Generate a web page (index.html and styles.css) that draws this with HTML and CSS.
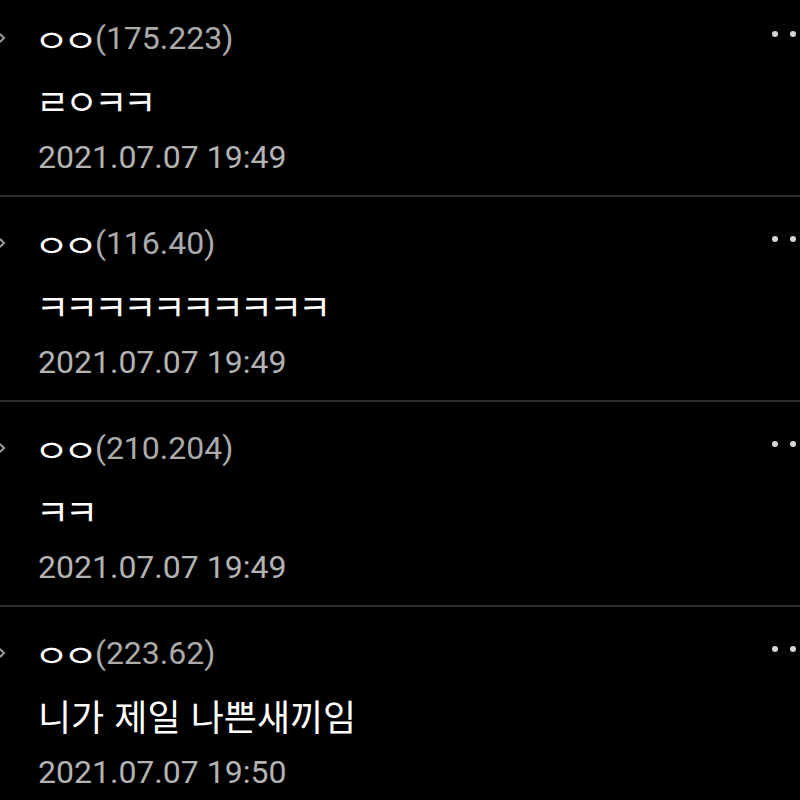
FILE: index.html
```html
<!DOCTYPE html>
<html lang="ko">
<head>
    <meta charset="UTF-8">
    <title>댓글</title>
    <link rel="stylesheet" href="styles.css">
</head>
<body>
    <ul class="comments">
        <li class="comment">
            <div class="comment-head">
                <span class="reply-mark"><svg width="6" height="10" viewBox="0 0 6 10"><path d="M0 1 L4 5 L0 9" fill="none" stroke="#9a9a9a" stroke-width="2"/></svg></span>
                <span class="nick">ㅇㅇ</span><span class="ip">(175.223)</span>
                <span class="menu"><i></i><i></i></span>
            </div>
            <div class="comment-text jamo">ㄹㅇㅋㅋ</div>
            <div class="comment-date">2021.07.07 19:49</div>
        </li>
        <li class="comment">
            <div class="comment-head">
                <span class="reply-mark"><svg width="6" height="10" viewBox="0 0 6 10"><path d="M0 1 L4 5 L0 9" fill="none" stroke="#9a9a9a" stroke-width="2"/></svg></span>
                <span class="nick">ㅇㅇ</span><span class="ip">(116.40)</span>
                <span class="menu"><i></i><i></i></span>
            </div>
            <div class="comment-text jamo">ㅋㅋㅋㅋㅋㅋㅋㅋㅋㅋ</div>
            <div class="comment-date">2021.07.07 19:49</div>
        </li>
        <li class="comment">
            <div class="comment-head">
                <span class="reply-mark"><svg width="6" height="10" viewBox="0 0 6 10"><path d="M0 1 L4 5 L0 9" fill="none" stroke="#9a9a9a" stroke-width="2"/></svg></span>
                <span class="nick">ㅇㅇ</span><span class="ip">(210.204)</span>
                <span class="menu"><i></i><i></i></span>
            </div>
            <div class="comment-text jamo">ㅋㅋ</div>
            <div class="comment-date">2021.07.07 19:49</div>
        </li>
        <li class="comment">
            <div class="comment-head">
                <span class="reply-mark"><svg width="6" height="10" viewBox="0 0 6 10"><path d="M0 1 L4 5 L0 9" fill="none" stroke="#9a9a9a" stroke-width="2"/></svg></span>
                <span class="nick">ㅇㅇ</span><span class="ip">(223.62)</span>
                <span class="menu"><i></i><i></i></span>
            </div>
            <div class="comment-text">니가 제일 나쁜새끼임</div>
            <div class="comment-date">2021.07.07 19:50</div>
        </li>
    </ul>
</body>
</html>
```

FILE: styles.css
```css
/* dark comment list */
html, body {
    margin: 0;
    padding: 0;
    background-color: #000;
}
body {
    font-family: Roboto, "Noto Sans CJK KR", sans-serif;
    color: #fff;
    overflow: hidden;
}
ul.comments {
    list-style: none;
    margin: 0;
    padding: 0;
}
li.comment {
    padding: 24px 4px 16px 38px;
    border-bottom: 2px solid #2e2e2e;
}
li.comment:first-child {
    padding-top: 16px;
}
div.comment-head {
    display: flex;
    align-items: center;
    height: 44px;
    font-size: 32px;
}
span.reply-mark {
    display: flex;
    align-items: center;
    width: 38px;
    margin-left: -38px;
}
span.nick {
    display: inline-block;
    font-family: "Noto Sans CJK KR", sans-serif;
    font-size: 38px;
    letter-spacing: -6px;
    margin-left: -4px;
    color: #fff;
    transform: scaleY(0.8);
}
span.ip {
    color: #ababab;
    margin-left: 3px;
}
span.menu {
    display: flex;
    gap: 12px;
    margin-left: auto;
    margin-top: -8px;
}
span.menu i {
    width: 6px;
    height: 6px;
    border-radius: 50%;
    background-color: #d6d6d6;
}
div.comment-text {
    margin-top: 18px;
    height: 44px;
    line-height: 44px;
    font-family: "Noto Sans CJK KR", sans-serif;
    font-size: 36px;
}
div.comment-text.jamo {
    font-size: 36px;
    letter-spacing: -4px;
    margin-left: -2px;
}
div.comment-date {
    margin-top: 13px;
    height: 44px;
    line-height: 44px;
    font-size: 32px;
    color: #b3b3b3;
}
```
